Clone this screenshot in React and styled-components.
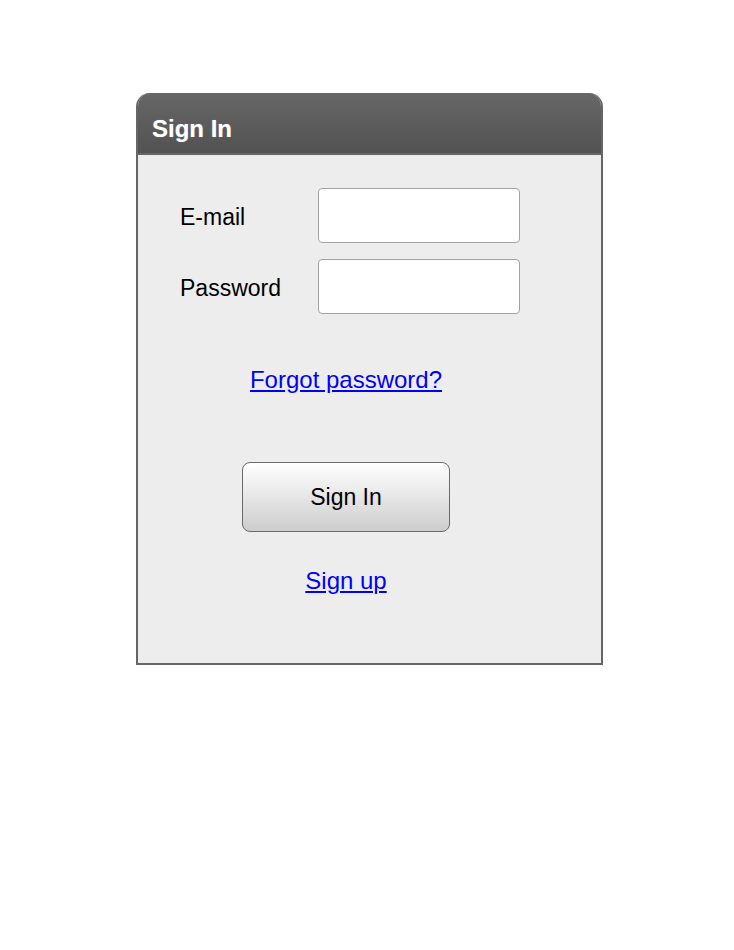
import styled, { createGlobalStyle } from "styled-components";

const GlobalStyle = createGlobalStyle`
  body {
    margin: 0;
    background: #ffffff;
    font-family: "Liberation Sans", Arial, sans-serif;
  }
`;

export default function App() {
  return (
    <>
      <GlobalStyle />
      <Page>
        <Panel>
          <Header>
            <Title>Sign In</Title>
          </Header>
          <Body>
            <Fields>
              <Row>
                <Label htmlFor="email">E-mail</Label>
                <Input id="email" type="text" />
              </Row>
              <Row>
                <Label htmlFor="password">Password</Label>
                <Input id="password" type="password" />
              </Row>
            </Fields>
            <Actions>
              <Link href="#">Forgot password?</Link>
              <SubmitButton type="button">Sign In</SubmitButton>
              <Link href="#" $gap={35}>
                Sign up
              </Link>
            </Actions>
          </Body>
        </Panel>
      </Page>
    </>
  );
}

const Page = styled.div`
  padding: 93px 0 0 136px;
  min-height: 950px;
  box-sizing: border-box;
`;

const Panel = styled.div`
  width: 467px;
  box-sizing: border-box;
  border: 2px solid #666666;
  border-top: none;
  border-radius: 14px 14px 0 0;
  overflow: hidden;
  background: #ededed;
`;

const Header = styled.div`
  height: 62px;
  box-sizing: border-box;
  padding: 21px 0 0 14px;
  background: linear-gradient(#676767, #525252);
  border-bottom: 2px solid #666666;
`;

const Title = styled.h1`
  margin: 0;
  font-size: 24px;
  line-height: 30px;
  font-weight: bold;
  color: #ffffff;
  text-shadow: 0 0 1px rgba(255, 255, 255, 0.4);
`;

const Body = styled.div`
  padding: 33px 0 68px;
`;

const Fields = styled.div`
  display: flex;
  flex-direction: column;
  gap: 16px;
  padding-left: 42px;
`;

const Row = styled.div`
  display: flex;
  align-items: center;
`;

const Label = styled.label`
  width: 138px;
  padding-top: 3px;
  font-size: 23px;
  color: #000000;
`;

const Input = styled.input`
  width: 202px;
  height: 55px;
  box-sizing: border-box;
  border: 1px solid #a3a3a3;
  border-radius: 4px;
  background: #ffffff;
  outline: none;
`;

const Actions = styled.div`
  display: flex;
  flex-direction: column;
  align-items: center;
  padding: 52px 47px 0 0;
`;

const Link = styled.a`
  margin-top: ${(p) => p.$gap || 0}px;
  font-size: 24px;
  line-height: 28px;
  color: #0000ff;
  text-decoration: underline;
`;

const SubmitButton = styled.button`
  margin-top: 68px;
  width: 208px;
  height: 70px;
  border: 1px solid #6a6a6a;
  border-radius: 8px;
  background: linear-gradient(#ffffff, #cdcdcd);
  font-family: "Liberation Sans", Arial, sans-serif;
  font-size: 23px;
  color: #000000;
  cursor: pointer;
`;
